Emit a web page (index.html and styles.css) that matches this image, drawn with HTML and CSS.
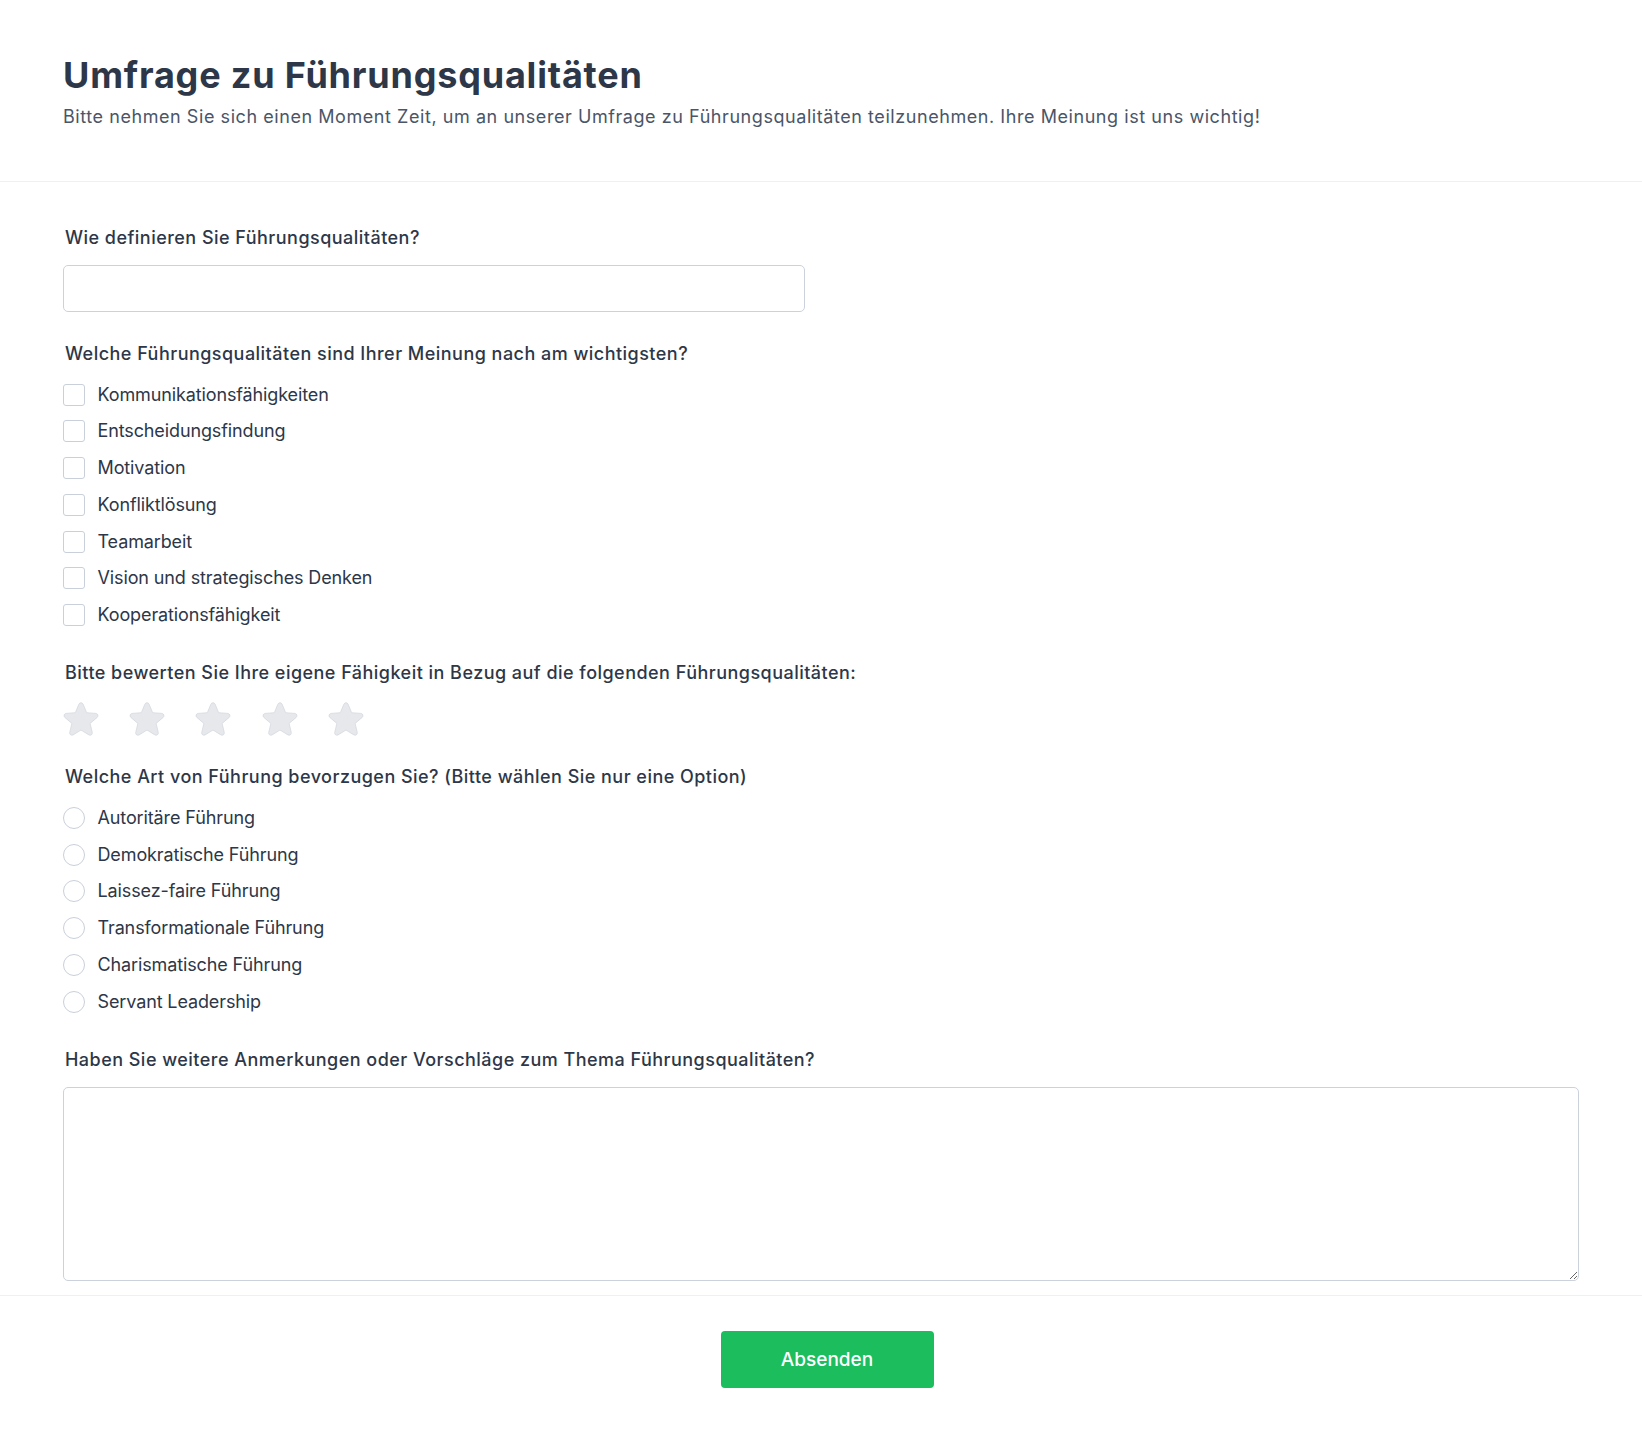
FILE: index.html
```html
<!DOCTYPE html>
<html lang="de">
<head>
<meta charset="utf-8">
<title>Umfrage zu Führungsqualitäten</title>
<link rel="stylesheet" href="styles.css">
</head>
<body>
<div class="page">
  <header class="header">
    <h1 class="title">Umfrage zu Führungsqualitäten</h1>
    <p class="subtitle">Bitte nehmen Sie sich einen Moment Zeit, um an unserer Umfrage zu Führungsqualitäten teilzunehmen. Ihre Meinung ist uns wichtig!</p>
  </header>

  <form class="form">
    <div class="field">
      <label class="label" for="def">Wie definieren Sie Führungsqualitäten?</label>
      <input class="input" id="def" type="text">
    </div>

    <div class="field field--group">
      <div class="label">Welche Führungsqualitäten sind Ihrer Meinung nach am wichtigsten?</div>
      <div class="options">
        <label class="option"><span class="checkbox"></span><span>Kommunikationsfähigkeiten</span></label>
        <label class="option"><span class="checkbox"></span><span>Entscheidungsfindung</span></label>
        <label class="option"><span class="checkbox"></span><span>Motivation</span></label>
        <label class="option"><span class="checkbox"></span><span>Konfliktlösung</span></label>
        <label class="option"><span class="checkbox"></span><span>Teamarbeit</span></label>
        <label class="option"><span class="checkbox"></span><span>Vision und strategisches Denken</span></label>
        <label class="option"><span class="checkbox"></span><span>Kooperationsfähigkeit</span></label>
      </div>
    </div>

    <div class="field field--rating">
      <div class="label">Bitte bewerten Sie Ihre eigene Fähigkeit in Bezug auf die folgenden Führungsqualitäten:</div>
      <div class="stars">
        <svg class="star" viewBox="1.5 1.4 21 21"><path d="M10.788 3.21c.448-1.077 1.976-1.077 2.424 0l2.082 5.006 5.404.434c1.164.093 1.636 1.545.749 2.305l-4.117 3.527 1.257 5.273c.271 1.136-.964 2.033-1.96 1.425L12 18.354 7.373 21.18c-.996.608-2.231-.29-1.96-1.425l1.257-5.273-4.117-3.527c-.887-.76-.415-2.212.749-2.305l5.404-.434 2.082-5.005Z"/></svg>
        <svg class="star" viewBox="1.5 1.4 21 21"><path d="M10.788 3.21c.448-1.077 1.976-1.077 2.424 0l2.082 5.006 5.404.434c1.164.093 1.636 1.545.749 2.305l-4.117 3.527 1.257 5.273c.271 1.136-.964 2.033-1.96 1.425L12 18.354 7.373 21.18c-.996.608-2.231-.29-1.96-1.425l1.257-5.273-4.117-3.527c-.887-.76-.415-2.212.749-2.305l5.404-.434 2.082-5.005Z"/></svg>
        <svg class="star" viewBox="1.5 1.4 21 21"><path d="M10.788 3.21c.448-1.077 1.976-1.077 2.424 0l2.082 5.006 5.404.434c1.164.093 1.636 1.545.749 2.305l-4.117 3.527 1.257 5.273c.271 1.136-.964 2.033-1.96 1.425L12 18.354 7.373 21.18c-.996.608-2.231-.29-1.96-1.425l1.257-5.273-4.117-3.527c-.887-.76-.415-2.212.749-2.305l5.404-.434 2.082-5.005Z"/></svg>
        <svg class="star" viewBox="1.5 1.4 21 21"><path d="M10.788 3.21c.448-1.077 1.976-1.077 2.424 0l2.082 5.006 5.404.434c1.164.093 1.636 1.545.749 2.305l-4.117 3.527 1.257 5.273c.271 1.136-.964 2.033-1.96 1.425L12 18.354 7.373 21.18c-.996.608-2.231-.29-1.96-1.425l1.257-5.273-4.117-3.527c-.887-.76-.415-2.212.749-2.305l5.404-.434 2.082-5.005Z"/></svg>
        <svg class="star" viewBox="1.5 1.4 21 21"><path d="M10.788 3.21c.448-1.077 1.976-1.077 2.424 0l2.082 5.006 5.404.434c1.164.093 1.636 1.545.749 2.305l-4.117 3.527 1.257 5.273c.271 1.136-.964 2.033-1.96 1.425L12 18.354 7.373 21.18c-.996.608-2.231-.29-1.96-1.425l1.257-5.273-4.117-3.527c-.887-.76-.415-2.212.749-2.305l5.404-.434 2.082-5.005Z"/></svg>
      </div>
    </div>

    <div class="field field--group">
      <div class="label">Welche Art von Führung bevorzugen Sie? (Bitte wählen Sie nur eine Option)</div>
      <div class="options">
        <label class="option"><span class="radio"></span><span>Autoritäre Führung</span></label>
        <label class="option"><span class="radio"></span><span>Demokratische Führung</span></label>
        <label class="option"><span class="radio"></span><span>Laissez-faire Führung</span></label>
        <label class="option"><span class="radio"></span><span>Transformationale Führung</span></label>
        <label class="option"><span class="radio"></span><span>Charismatische Führung</span></label>
        <label class="option"><span class="radio"></span><span>Servant Leadership</span></label>
      </div>
    </div>

    <div class="field field--last">
      <label class="label" for="notes">Haben Sie weitere Anmerkungen oder Vorschläge zum Thema Führungsqualitäten?</label>
      <textarea class="textarea" id="notes"></textarea>
    </div>
  </form>

  <footer class="footer">
    <button class="button" type="button">Absenden</button>
  </footer>
</div>
</body>
</html>
```

FILE: styles.css
```css
* {
  box-sizing: border-box;
}

html, body {
  margin: 0;
  padding: 0;
  background: #ffffff;
}

body {
  font-family: Inter, "Noto Sans", "Liberation Sans", sans-serif;
  color: #2d3748;
}

.page {
  width: 100%;
}

.header {
  padding: 55px 63px 50px;
  border-bottom: 1px solid #edf0f4;
}

.title {
  margin: 0;
  font-size: 36px;
  line-height: 40px;
  font-weight: 700;
  color: #2d3748;
  letter-spacing: 0.8px;
}

.subtitle {
  margin: 8px 0 0;
  font-size: 18px;
  line-height: 28px;
  color: #4a5568;
  letter-spacing: 0.56px;
}

.form {
  padding: 42px 63px 14px;
}

.field {
  margin-bottom: 28px;
}

.field--group {
  margin-bottom: 30px;
}

.field--rating {
  margin-bottom: 26px;
}

.field--last {
  margin-bottom: 0;
}

.label {
  display: block;
  margin: 0 0 13px 2px;
  font-size: 18px;
  line-height: 28px;
  font-weight: 500;
  color: #2d3748;
  letter-spacing: 0.47px;
}

.field--group .label {
  margin-bottom: 12.5px;
}

.field--rating .label {
  margin-bottom: 14px;
}

.input {
  display: block;
  width: 742px;
  height: 47px;
  border: 1px solid #cbd2dc;
  border-radius: 5px;
  background: #fff;
  font: inherit;
}

.options {
  display: flex;
  flex-direction: column;
  gap: 8.8px;
}

.option {
  display: flex;
  align-items: center;
  gap: 12.5px;
  height: 28px;
  font-size: 18px;
  line-height: 28px;
  color: #2d3748;
  letter-spacing: -0.12px;
}

.checkbox {
  flex: none;
  width: 22px;
  height: 22px;
  border: 1px solid #c9d0da;
  border-radius: 3px;
  background: #fff;
}

.radio {
  flex: none;
  width: 22px;
  height: 22px;
  border: 1px solid #c9d0da;
  border-radius: 50%;
  background: #fff;
}

.stars {
  display: flex;
  gap: 30.2px;
  height: 36px;
}

.star {
  width: 36px;
  height: 36px;
  fill: #e6e8ec;
  stroke: #d0d4dc;
  stroke-width: 0.4;
  stroke-linejoin: round;
}

.textarea {
  display: block;
  width: 100%;
  height: 194px;
  border: 1px solid #cbd2dc;
  border-radius: 5px;
  background: #fff;
  font: inherit;
  resize: vertical;
}

.footer {
  border-top: 1px solid #eef0f3;
  padding: 35.7px 0 45px 12px;
  display: flex;
  justify-content: center;
}

.button {
  width: 213px;
  height: 57px;
  border: none;
  border-radius: 4px;
  background: #1bbd5d;
  color: #ffffff;
  font-family: Inter, "Noto Sans", sans-serif;
  font-size: 19px;
  font-weight: 500;
  cursor: pointer;
}
```
